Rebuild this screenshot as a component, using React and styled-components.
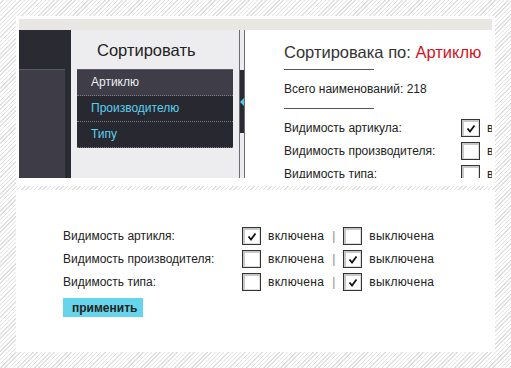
import React from "react";
import styled, { createGlobalStyle } from "styled-components";

const GlobalStyle = createGlobalStyle`
  html, body {
    margin: 0;
    padding: 0;
  }
  body {
    font-family: "Liberation Sans", Arial, sans-serif;
    background: repeating-linear-gradient(
      135deg,
      #ffffff 0px,
      #ffffff 2px,
      #e0e0e0 2px,
      #e0e0e0 3px
    );
    min-height: 368px;
  }
`;

const Page = styled.div`
  padding: 16px;
  display: flex;
  flex-direction: column;
  gap: 4px;
  width: 479px;
`;

/* ------------------------------- top panel ------------------------------ */
const ShotFrame = styled.div`
  background: #fff;
  padding: 3px 3px 8px;
  height: 159px;
`;

const Shot = styled.div`
  display: flex;
  flex-direction: column;
  height: 159px;
  overflow: hidden;
`;

const GrayBar = styled.div`
  height: 11px;
  background: #e8e7e3;
`;

const ShotBody = styled.div`
  flex: 1;
  display: flex;
  min-height: 0;
`;

const DarkSide = styled.div`
  width: 52px;
  display: flex;
  flex-direction: column;
  background: #2a2a33;

  .top {
    height: 39px;
  }
  .bottom {
    flex: 1;
    width: 46px;
    background: #3d3c47;
    border-top: 1px solid #5a5a64;
  }
`;

const SortPanel = styled.div`
  width: 168px;
  background: #ededef;
  display: flex;
  flex-direction: column;
`;

const SortTitle = styled.div`
  height: 39px;
  box-sizing: border-box;
  padding: 10px 0 0 26px;
  font-size: 16.5px;
  line-height: 20px;
  color: #222;
`;

const Menu = styled.ul`
  list-style: none;
  margin: 0 0 0 6px;
  padding: 0;
  width: 156px;
  background: #282830;
  border-top: 1px solid #5c5b66;
`;

const MenuItem = styled.li`
  height: 26px;
  line-height: 25px;
  box-sizing: border-box;
  padding-left: 14px;
  font-size: 12px;
  border-bottom: 1px dotted #7a7a80;
  color: ${(p) => (p.$active ? "#eeeef0" : "#5bd0ee")};
  background: ${(p) => (p.$active ? "#3e3d48" : "#282830")};
`;

const Divider = styled.div`
  width: 4px;
  background: #ededef;
  border-left: 1px solid #6c6c70;
  border-right: 1px solid #6c6c70;
  display: flex;
  flex-direction: column;

  .bar {
    margin-top: 40px;
    height: 63px;
    background: #2a2a33;
    display: flex;
    align-items: center;
  }
  .arrow {
    width: 0;
    height: 0;
    border-top: 4px solid transparent;
    border-bottom: 4px solid transparent;
    border-right: 4px solid #4cc9ec;
  }
`;

const Content = styled.div`
  flex: 1;
  background: #fff;
  padding: 12px 0 0 39px;
  overflow: hidden;
  color: #222;
`;

const Heading = styled.div`
  font-size: 16.5px;
  line-height: 21px;
  white-space: nowrap;
  color: #333;

  span {
    color: #d4141c;
  }
`;

const Rule = styled.div`
  width: 90px;
  height: 1px;
  background: #555;
  margin: ${(p) => p.$m};
`;

const Total = styled.div`
  font-size: 12px;
  line-height: 18px;
  margin-top: 10px;
  white-space: nowrap;
`;

/* ------------------------------ option rows ----------------------------- */
const Rows = styled.div`
  display: flex;
  flex-direction: column;
  gap: 5px;
`;

const Row = styled.div`
  display: flex;
  align-items: center;
  height: 18px;
  font-size: 12px;
  color: #222;
  white-space: nowrap;
`;

const Label = styled.div`
  width: ${(p) => p.$w}px;
  flex: none;
`;

const State = styled.span`
  margin-left: 7px;
  letter-spacing: 0.3px;
`;

const Sep = styled.span`
  margin: 0 8px;
  color: #888;
`;

const Box = styled.div`
  width: 19px;
  height: 18px;
  box-sizing: border-box;
  border: 1px solid #333;
  background: #fff;
  box-shadow: inset 2px 2px 0 #c8c8c8, inset -1px -1px 0 #e0e0e0;
  flex: none;
  display: flex;
  align-items: center;
  justify-content: center;
`;

const Check = ({ on }) => (
  <Box>
    {on && (
      <svg width="10" height="9" viewBox="0 0 10 9">
        <path
          d="M1.5 4.5 L4 7.5 L8.5 1.5"
          fill="none"
          stroke="#111"
          strokeWidth="1.8"
        />
      </svg>
    )}
  </Box>
);

const OptionRow = ({ label, on, w }) => (
  <Row>
    <Label $w={w}>{label}</Label>
    <Check on={on} />
    <State>включена</State>
    <Sep>|</Sep>
    <Check on={!on} />
    <State>выключена</State>
  </Row>
);

/* ------------------------------ bottom panel ---------------------------- */
const FormPanel = styled.div`
  background: #fff;
  height: 162px;
  box-sizing: border-box;
  padding: 37px 0 0 47px;
`;

const Apply = styled.button`
  margin-top: 7px;
  width: 80px;
  height: 19px;
  padding: 0 0 0 9px;
  border: none;
  background: #66d4ea;
  text-align: left;
  font-family: "Liberation Sans", Arial, sans-serif;
  font-weight: bold;
  font-size: 12px;
  color: #222;
  cursor: pointer;
`;

const options = [
  { label: "Видимость артикля:", on: true },
  { label: "Видимость производителя:", on: false },
  { label: "Видимость типа:", on: false },
];

const topOptions = [
  { label: "Видимость артикула:", on: true },
  { label: "Видимость производителя:", on: false },
  { label: "Видимость типа:", on: false },
];

export default function App() {
  return (
    <>
      <GlobalStyle />
      <Page>
        <ShotFrame>
          <Shot>
            <GrayBar />
            <ShotBody>
              <DarkSide>
                <div className="top" />
                <div className="bottom" />
              </DarkSide>
              <SortPanel>
                <SortTitle>Сортировать</SortTitle>
                <Menu>
                  <MenuItem $active>Артиклю</MenuItem>
                  <MenuItem>Производителю</MenuItem>
                  <MenuItem>Типу</MenuItem>
                </Menu>
              </SortPanel>
              <Divider>
                <div className="bar">
                  <div className="arrow" />
                </div>
              </Divider>
              <Content>
                <Heading>
                  Сортировака по: <span>Артиклю</span>
                </Heading>
                <Rule $m="6px 0 0" />
                <Total>Всего наименований: 218</Total>
                <Rule $m="10px 0 10px" />
                <Rows>
                  {topOptions.map((o) => (
                    <OptionRow key={o.label} label={o.label} on={o.on} w={177} />
                  ))}
                </Rows>
              </Content>
            </ShotBody>
          </Shot>
        </ShotFrame>
        <FormPanel>
          <Rows>
            {options.map((o) => (
              <OptionRow key={o.label} label={o.label} on={o.on} w={179} />
            ))}
          </Rows>
          <Apply>применить</Apply>
        </FormPanel>
      </Page>
    </>
  );
}
